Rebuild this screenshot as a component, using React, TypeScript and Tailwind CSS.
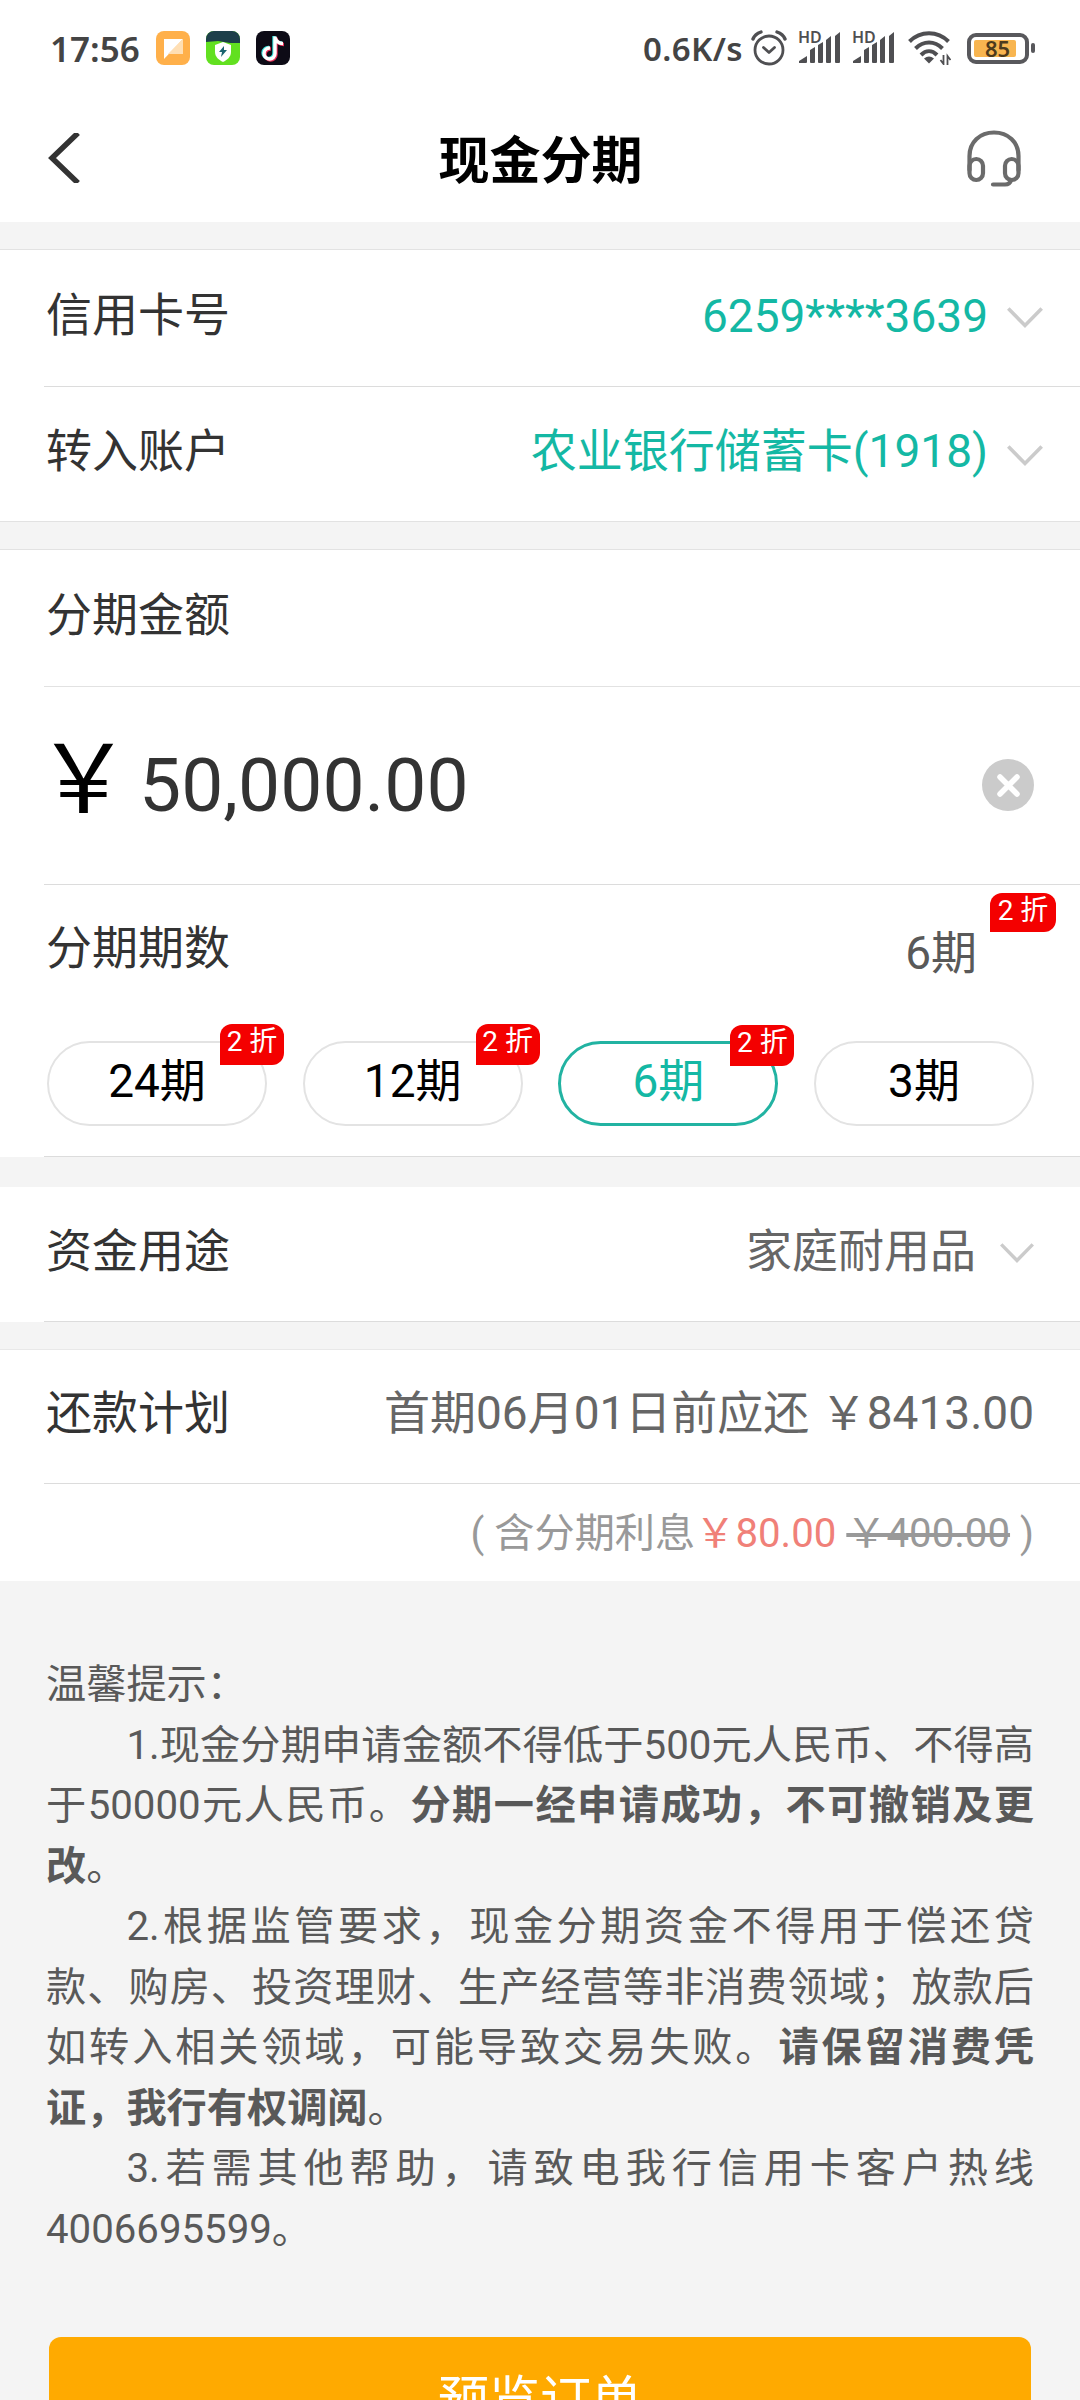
import React, { useState } from "react";

interface Term {
  label: string;
  discount?: string;
}

const TERMS: Term[] = [
  { label: "24期", discount: "2 折" },
  { label: "12期", discount: "2 折" },
  { label: "6期", discount: "2 折" },
  { label: "3期" },
];

function SignalIcon() {
  return (
    <div className="relative h-[34px] w-[42px]">
      <span className="absolute -top-[2px] -left-px font-['Noto_Sans'] text-[16px] leading-[16px] font-semibold">
        HD
      </span>
      <svg width="42" height="34" viewBox="0 0 42 34" fill="currentColor">
        <path d="M0 32v-2l8-5v6q0 1-1 1zM11 19l5-3v15q0 1-1 1h-3q-1 0-1-1zM19 14l5-3v20q0 1-1 1h-3q-1 0-1-1zM27 9l5-4v26q0 1-1 1h-3q-1 0-1-1zM36 5l5-4v30q0 1-1 1h-3q-1 0-1-1z" />
      </svg>
    </div>
  );
}

function StatusBar() {
  return (
    <div className="flex h-24 items-center pr-[45px] pl-[50px] text-[#4f4f52]">
      <span className="font-['Noto_Sans'] text-[35px] leading-none font-semibold text-[#444]">
        17:56
      </span>
      <div className="ml-[16px] flex gap-4">
        {/* Notes */}
        <svg width="34" height="34" viewBox="0 0 34 34">
          <rect width="34" height="34" rx="8" fill="#ffb04a" />
          <path d="M8 8h19L8 28z" fill="#fff" />
          <path d="M27 8v15H12z" fill="#ffdfb4" />
        </svg>
        {/* Security */}
        <svg width="34" height="34" viewBox="0 0 34 34">
          <rect width="34" height="34" rx="8" fill="#62e020" />
          <path d="M0 11V8a8 8 0 0 1 8-8h18a8 8 0 0 1 8 8v4l-10 0-12-2z" fill="#1d3f4a" />
          <path d="M17 11l8 3v7c0 5-4 8-8 10-4-2-8-5-8-10v-7z" fill="#fff" />
          <path d="M18 15l-5 6h3l-1 5 6-7h-3z" fill="#1b6470" />
        </svg>
        {/* Douyin */}
        <svg width="34" height="34" viewBox="0 0 34 34" fill="none" strokeWidth="3.4">
          <rect width="34" height="34" rx="8" fill="#0d0b16" />
          <path d="M18 5v17a5.500 5.500 0 1 1-5-5.500M18 6c1 4 4 6 8 6" stroke="#35e0dc" />
          <path d="M20 6.500v17a5.500 5.500 0 1 1-5-5.500M20 7.500c1 4 4 6 8 6" stroke="#e8325a" />
          <path d="M19 5.500v17a5.500 5.500 0 1 1-5-5.500M19 6.500c1 4 4 6 8 6" stroke="#fff" />
        </svg>
      </div>

      <span className="ml-auto font-['Noto_Sans'] text-[33px] leading-none font-semibold tracking-[0.4px] text-[#444]">
        0.6K/s
      </span>
      <svg className="mb-px ml-2" width="36" height="36" viewBox="0 0 36 36" fill="none" stroke="currentColor" strokeWidth="2.800" strokeLinecap="round" strokeLinejoin="round">
        <circle cx="18" cy="20" r="14" />
        <path d="M12.500 17.500l5.500 5 5.500-5" />
        <path d="M2 9q2-5 8-7M34 9q-2-5-8-7" strokeWidth="3.400" />
      </svg>
      <div className="ml-3 flex gap-3">
        <SignalIcon />
        <SignalIcon />
      </div>
      <svg className="ml-[13px]" width="43" height="34" viewBox="0 0 43 34" fill="none" stroke="currentColor" strokeWidth="4">
        <path d="M1.500 10.500c11-11 28-11 39 0M7.500 17.500c8-8 19-8 27 0M13 24c5-5 11-5 16 0" />
        <path d="M16 27.500q5-4 10 0l-5 5z" fill="currentColor" stroke="none" />
        <path d="M35.500 24v9l-3-4M39.500 34v-9l3 4" strokeWidth="1.800" />
      </svg>
      <div className="ml-4 flex items-center gap-0.5">
        <div className="flex h-[31px] w-[62px] items-center rounded-[9px] border-4 border-[#58585c] pl-[3px]">
          <div className="flex h-[17px] w-[42px] items-center justify-center rounded-xs bg-[#f8b550] pl-[5px] font-['Noto_Sans'] text-[22px] leading-none font-semibold text-[#4d3a1c]">
            85
          </div>
        </div>
        <div className="h-[10px] w-1 rounded-full bg-[#58585c]" />
      </div>
    </div>
  );
}

function Header() {
  return (
    <div className="flex h-[126px] items-center pr-[59px] pb-[2px] pl-[48px]">
      <svg width="54" height="50" viewBox="0 0 54 50" fill="none" stroke="#333" strokeWidth="5.500">
        <path d="M30 0L4 25l26 25" />
      </svg>
      <h1 className="flex-1 pt-[6px] pl-[12px] text-center text-[51px] leading-none font-bold text-black">
        现金分期
      </h1>
      <svg width="54" height="57" viewBox="0 0 54 57" fill="none" stroke="#6b6b6b" strokeWidth="4.200" strokeLinecap="round">
        <path d="M2.500 40V26C2.500 12 13 2.500 27 2.500S51.500 12 51.500 26v14" />
        <rect x="2.500" y="29" width="13.500" height="21" rx="6.700" />
        <rect x="38" y="29" width="13.500" height="21" rx="6.700" />
        <path d="M44 50q-1 4.500-6 4.500H26" />
      </svg>
    </div>
  );
}

function Chevron({ width = 36 }: { width?: number }) {
  return (
    <svg width={width} viewBox="0 0 36 22" fill="none" stroke="#cbcbcb" strokeWidth="3.600">
      <path d="M1.300 1.500L18 18.500 34.700 1.500" />
    </svg>
  );
}

function Badge({ className, children }: { className: string; children: React.ReactNode }) {
  return (
    <span
      className={`absolute flex justify-center rounded-xl rounded-bl-none bg-[#f40000] text-[28px] leading-[36px] whitespace-pre text-white ${className}`}
    >
      {children}
    </span>
  );
}

export default function App() {
  const [selected, setSelected] = useState("6期");

  return (
    <div className="h-[2400px] w-[1080px] overflow-hidden bg-[#f4f4f4] font-[Roboto,'Noto_Sans_CJK_SC',sans-serif] text-[46px] leading-none text-[#333]">
      <div className="bg-white">
        <StatusBar />
        <Header />
      </div>

      {/* Accounts */}
      <div className="mt-[27px] border-y border-[#e2e2e2] bg-white">
        <div className="ml-11 flex h-[137px] items-center border-b border-[#dcdcdc] pr-[37px] pb-[6px] pl-0.5">
          <span>信用卡号</span>
          <span className="mr-[19px] ml-auto pt-px text-[#14b8a4]">6259****3639</span>
          <div className="pt-[5px]">
            <Chevron />
          </div>
        </div>
        <div className="ml-11 flex h-[134px] items-center pr-[37px] pb-[6px] pl-0.5">
          <span>转入账户</span>
          <span className="mr-[19px] ml-auto text-[#14b8a4]">农业银行储蓄卡(1918)</span>
          <div className="pt-[10px]">
            <Chevron />
          </div>
        </div>
      </div>

      {/* Amount and terms */}
      <div className="mt-[27px] border-t border-[#e2e2e2] bg-white">
        <div className="ml-11 flex h-[137px] items-center border-b border-[#e2e2e2] pb-[6px] pl-0.5">
          分期金额
        </div>
        <div className="ml-9 flex h-[197px] items-center">
          <span className="pb-[11px] text-[95px] text-black">￥</span>
          <span className="ml-[8px] text-[75px]">50,000.00</span>
          <svg className="mr-[46px] mb-[2px] ml-auto" width="52" height="52" viewBox="0 0 52 52">
            <circle cx="26" cy="26" r="26" fill="#cbcbcb" />
            <path d="M18 18l17 17M35 18L18 35" stroke="#fff" strokeWidth="5.500" strokeLinecap="round" />
          </svg>
        </div>
        <div className="ml-11 border-y border-[#dcdcdc] pr-[46px] pl-[3px]">
          <div className="relative flex h-[156px] items-start justify-between pt-[40px]">
            <span className="-ml-px">分期期数</span>
            <span className="pt-[5px] pr-[57px] text-[#595959]">6期</span>
            <Badge className="top-2 -right-[22px] h-[39px] w-[66px]">2 折</Badge>
          </div>
          <div className="flex justify-between pb-[30px]">
            {TERMS.map((term) => (
              <button
                key={term.label}
                onClick={() => setSelected(term.label)}
                className={`relative h-[85px] w-[220px] rounded-full pb-[6px] ${
                  selected === term.label
                    ? "border-3 border-[#22b3a2] text-[#14b8a4]"
                    : "border-2 border-[#e3e3e3] text-black"
                }`}
              >
                {term.label}
                {term.discount && (
                  <Badge className="-top-[19px] -right-[19px] h-[41px] w-[64px]">
                    {term.discount}
                  </Badge>
                )}
              </button>
            ))}
          </div>
        </div>
      </div>

      {/* Purpose */}
      <div className="mt-[30px] bg-white">
        <div className="ml-11 flex h-[135px] items-center border-b border-[#dcdcdc] pr-[46px] pb-[7px] pl-0.5">
          <span>资金用途</span>
          <span className="mr-[24px] ml-auto text-[#666]">家庭耐用品</span>
          <div className="pt-[5px]">
            <Chevron width={34} />
          </div>
        </div>
      </div>

      {/* Repayment plan */}
      <div className="mt-[27px] border-t border-[#e8e8e8] bg-white">
        <div className="ml-11 flex h-[134px] items-center justify-between border-b border-[#dcdcdc] pr-[46px] pb-[7px] pl-0.5">
          <span>还款计划</span>
          <span className="text-[#666]">首期06月01日前应还 ￥8413.00</span>
        </div>
        <div className="flex h-[97px] items-center justify-end pt-[3px] pr-[46px] text-[40.200px] text-[#999]">
          <span>
            ( 含分期利息<span className="text-[#f08078]">￥80.00</span>{" "}
            <span className="line-through">￥400.00</span> )
          </span>
        </div>
      </div>

      {/* Notes */}
      <div className="mt-[74px] px-[46px] text-justify text-[40.200px] leading-[60.500px] text-[#595959]">
        <p>温馨提示：</p>
        <p className="indent-[2em]">
          1.现金分期申请金额不得低于500元人民币、不得高于50000元人民币。
          <b>分期一经申请成功，不可撤销及更改</b>。
        </p>
        <p className="indent-[2em]">
          2.根据监管要求，现金分期资金不得用于偿还贷款、购房、投资理财、生产经营等非消费领域；放款后如转入相关领域，可能导致交易失败。
          <b>请保留消费凭证，我行有权调阅</b>。
        </p>
        <p className="indent-[2em]">3.若需其他帮助，请致电我行信用卡客户热线4006695599。</p>
      </div>

      <button className="mx-[49px] mt-[77px] block h-[130px] w-[982px] rounded-xl bg-[#ffaa00] pb-1 text-[51px] text-white">
        预览订单
      </button>
    </div>
  );
}
